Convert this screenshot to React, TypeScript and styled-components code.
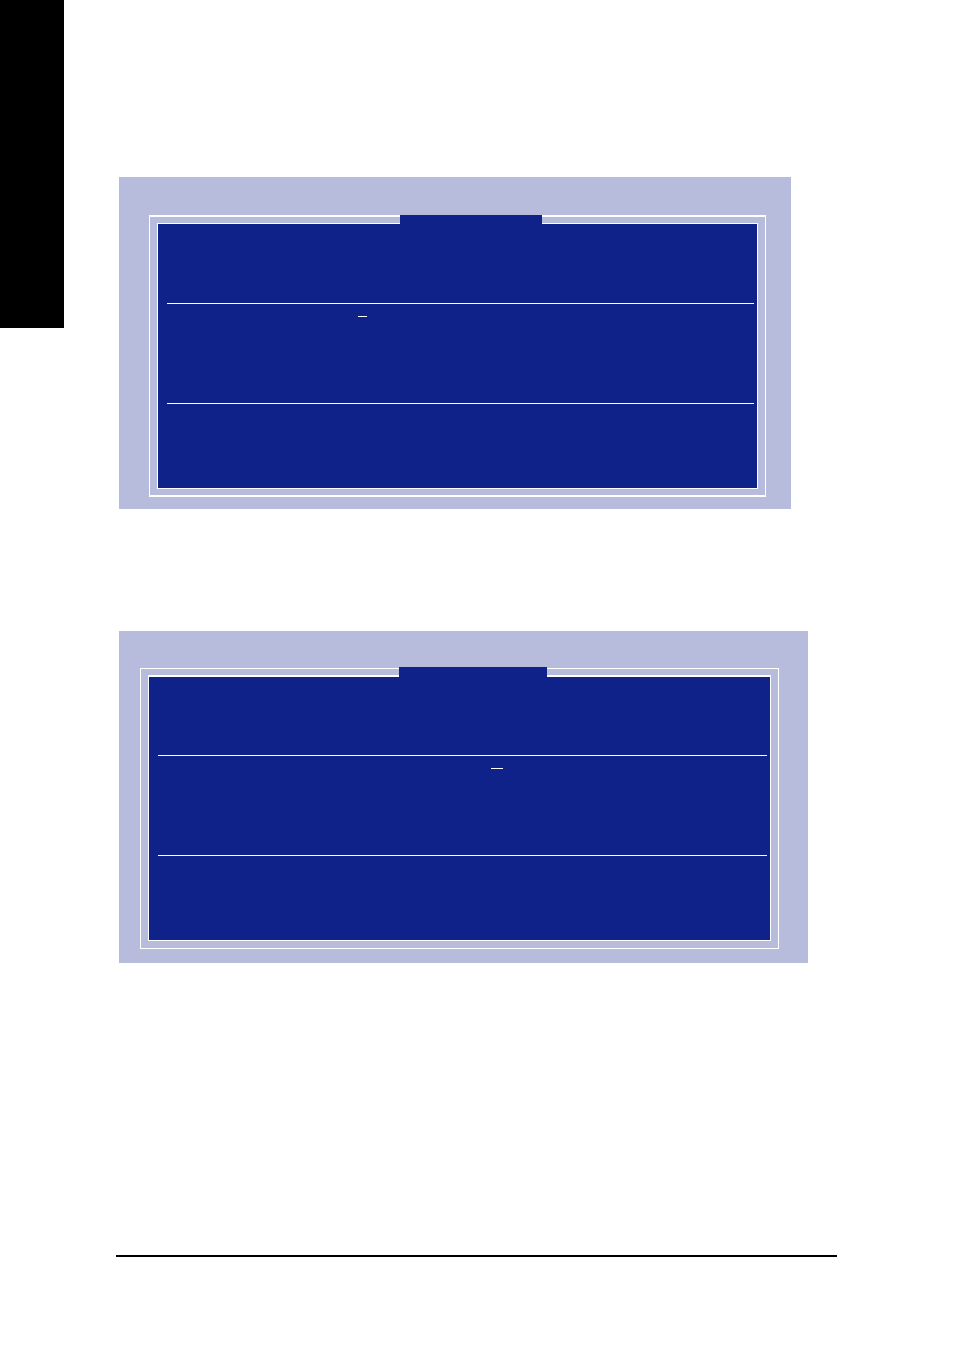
import React from "react";
import styled, { createGlobalStyle } from "styled-components";

const GlobalStyle = createGlobalStyle`
  * { box-sizing: border-box; }
  body {
    margin: 0;
    background: #ffffff;
    font-family: "Liberation Sans", Arial, sans-serif;
  }
`;

const Page = styled.div`
  display: flex;
  align-items: flex-start;
  min-height: 100vh;
`;

const ChapterTab = styled.aside`
  flex: 0 0 64px;
  height: 328px;
  background: #000000;
`;

const Content = styled.main`
  flex: 1;
  min-width: 0;
  padding: 177px 117px 94px 52px;
`;

const Panel = styled.section<{ $padding: string; $endGap: number }>`
  margin: 0 ${(p) => p.$endGap}px 122px 3px;
  padding: ${(p) => p.$padding};
  background: #b7bbdc;
`;

const OuterFrame = styled.div<{ $line: number; $padding: string }>`
  position: relative;
  padding: ${(p) => p.$padding};
  border: solid #ffffff;
  border-width: ${(p) => p.$line}px 1px;
`;

const TitleNotch = styled.div<{ $left: number; $width: number }>`
  position: absolute;
  top: -2px;
  left: ${(p) => p.$left}px;
  width: ${(p) => p.$width}px;
  height: 10px;
  background: #0f228a;
`;

const Screen = styled.div<{ $topLine: number }>`
  padding: 0 3px 0 9px;
  border: 1px solid #ffffff;
  border-top-width: ${(p) => p.$topLine}px;
  background: #0f228a;
`;

const Header = styled.header<{ $height: number }>`
  height: ${(p) => p.$height}px;
`;

const Body = styled.div<{ $indent: number }>`
  height: 101px;
  padding: 12px 0 0 ${(p) => p.$indent}px;
  border: solid #ffffff;
  border-width: 1px 0;
`;

const Cursor = styled.div<{ $width: number }>`
  width: ${(p) => p.$width}px;
  height: 1px;
  background: #ffffff;
`;

const Legend = styled.footer`
  height: 84px;
`;

const PageRule = styled.hr`
  height: 2px;
  margin: 292px 0 0;
  border: 0;
  background: #000000;
`;

interface DialogProps {
  padding: string;
  endGap: number;
  line: number;
  framePadding: string;
  notchLeft: number;
  notchWidth: number;
  topLine: number;
  headerHeight: number;
  cursorIndent: number;
  cursorWidth: number;
}

function SetupDialog(p: DialogProps) {
  return (
    <Panel $padding={p.padding} $endGap={p.endGap}>
      <OuterFrame $line={p.line} $padding={p.framePadding}>
        <Screen $topLine={p.topLine}>
          <Header $height={p.headerHeight} />
          <Body $indent={p.cursorIndent}>
            <Cursor $width={p.cursorWidth} />
          </Body>
          <Legend />
        </Screen>
        <TitleNotch $left={p.notchLeft} $width={p.notchWidth} />
      </OuterFrame>
    </Panel>
  );
}

const Dialogs = styled.div`
  ${Panel}:last-child {
    margin-bottom: 0;
  }
`;

export default function App() {
  return (
    <>
      <GlobalStyle />
      <Page>
        <ChapterTab />
        <Content>
          <Dialogs>
            <SetupDialog
              padding="38px 25px 12px 30px"
              endGap={46}
              line={2}
              framePadding="6px 7px"
              notchLeft={250}
              notchWidth={142}
              topLine={1}
              headerHeight={79}
              cursorIndent={191}
              cursorWidth={9}
            />
            <SetupDialog
              padding="37px 29px 14px 21px"
              endGap={29}
              line={1}
              framePadding="6px 7px 7px"
              notchLeft={258}
              notchWidth={148}
              topLine={2}
              headerHeight={78}
              cursorIndent={333}
              cursorWidth={12}
            />
          </Dialogs>
          <PageRule />
        </Content>
      </Page>
    </>
  );
}
